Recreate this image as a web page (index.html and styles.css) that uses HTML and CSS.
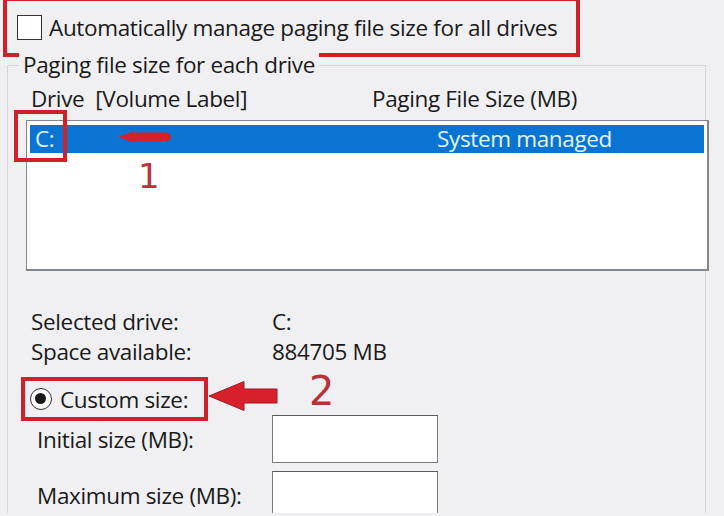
FILE: index.html
```html
<!DOCTYPE html>
<html lang="en">
<head>
    <meta charset="UTF-8">
    <meta name="viewport" content="width=device-width, initial-scale=1.0">
    <title>Virtual Memory</title>
    <link rel="stylesheet" href="styles.css">
</head>
<body>
    <div class="dialog">
        <label class="auto-row">
            <span class="checkbox"></span>
            <span>Automatically manage paging file size for all drives</span>
        </label>

        <div class="group">
            <div class="legend">Paging file size for each drive</div>
            <div class="list-head">
                <span>Drive&nbsp; [Volume Label]</span>
                <span>Paging File Size (MB)</span>
            </div>
            <div class="listbox">
                <div class="list-row selected">
                    <span>C:</span>
                    <span>System managed</span>
                </div>
            </div>

            <div class="info">
                <span>Selected drive:</span><span>C:</span>
                <span>Space available:</span><span>884705 MB</span>
            </div>

            <label class="radio-row">
                <span class="radio"></span>
                <span>Custom size:</span>
            </label>
            <div class="field-row">
                <label for="initial-size">Initial size (MB):</label>
                <input type="text" id="initial-size" class="size-input">
            </div>
            <div class="field-row">
                <label for="max-size">Maximum size (MB):</label>
                <input type="text" id="max-size" class="size-input">
            </div>
        </div>

        <!-- annotations drawn over the dialog -->
        <div class="mark mark-drive"></div>
        <svg class="arrow arrow-1" width="56" height="14" viewBox="0 0 56 14">
            <path d="M1 7 L16 1.5 L16 2.5 L48 2.5 Q54 3 54 7 Q54 11 48 11.5 L16 11.5 L16 12.5 Z" fill="#d8202c"/>
        </svg>
        <span class="step step-1">1</span>
        <svg class="arrow arrow-2" width="72" height="32" viewBox="0 0 72 32">
            <path d="M2 16 L37 1.5 L37 9 L70 9 L70 23 L37 23 L37 30.5 Z" fill="#d8202c" stroke="#9e1a22" stroke-width="1"/>
        </svg>
        <span class="step step-2">2</span>
    </div>
</body>
</html>
```

FILE: styles.css
```css
* {
    margin: 0;
    padding: 0;
    box-sizing: border-box;
}

body {
    background-color: #f0f0f2;
    color: #1a1a1a;
    font-family: 'Open Sans', 'Noto Sans', sans-serif;
    font-size: 22.5px;
    letter-spacing: -0.35px;
    overflow: hidden;
}

.dialog {
    position: relative;
    width: 724px;
    height: 516px;
}

.auto-row {
    display: flex;
    align-items: center;
    gap: 7px;
    width: 577px;
    height: 60px;
    margin: -3px 0 0 3px;
    padding-left: 10px;
    border: 4px solid #d0202a;
}

.checkbox {
    width: 25px;
    height: 25px;
    border: 1.5px solid #333;
    background: #fff;
}

.group {
    width: 699px;
    height: 460px;
    margin: 8px 0 0 7px;
    border: 1px solid #d6d6d8;
    border-bottom: none;
}

.legend {
    width: fit-content;
    margin: -13px 0 0 11px;
    padding: 0 4px;
    line-height: 24px;
    background: #f0f0f2;
}

.list-head {
    display: grid;
    grid-template-columns: 341px auto;
    margin-top: 10px;
    padding-left: 23px;
    line-height: 24px;
}

.listbox {
    width: 683px;
    height: 151px;
    margin: 9px 0 0 18px;
    padding: 4px 3px;
    background: #fff;
    border: 1px solid #82868e;
    border-right-width: 2px;
    border-bottom-width: 2px;
}

.list-row {
    display: grid;
    grid-template-columns: 402px auto;
    height: 28px;
    padding-left: 5px;
    line-height: 28px;
}

.list-row.selected {
    background: #0a74d2;
    color: #e4f4ff;
}

.info {
    display: grid;
    grid-template-columns: 241px auto;
    margin-top: 36px;
    padding-left: 23px;
    line-height: 30px;
}

.radio-row {
    display: flex;
    align-items: center;
    gap: 8px;
    width: 187px;
    height: 44px;
    margin: 10px 0 0 13px;
    padding-left: 5px;
    border: 4px solid #d0202a;
}

.radio {
    position: relative;
    width: 22px;
    height: 22px;
    border: 1.5px solid #333;
    border-radius: 50%;
    background: #fff;
}

.radio::after {
    content: '';
    position: absolute;
    top: 4px;
    left: 4px;
    width: 11px;
    height: 11px;
    border-radius: 50%;
    background: #1a1a1a;
}

.field-row {
    display: flex;
    align-items: center;
    margin-top: 8px;
    padding-left: 29px;
}

.radio-row + .field-row {
    margin-top: -6px;
}

.field-row label {
    width: 235px;
}

.size-input {
    width: 166px;
    height: 48px;
    background: #fff;
    border: 1px solid #7a7a7a;
    border-top-color: #5a5a5a;
    outline: none;
}

.mark {
    position: absolute;
    border: 4px solid #d0202a;
}

.mark-drive {
    left: 14px;
    top: 113px;
    width: 53px;
    height: 52px;
}

.arrow {
    position: absolute;
}

.arrow-1 {
    left: 117px;
    top: 133px;
}

.arrow-2 {
    left: 207px;
    top: 383px;
}

.step {
    position: absolute;
    font-family: 'DejaVu Sans', sans-serif;
    letter-spacing: 0;
    color: #b8323a;
    line-height: 0.75;
}

.step-1 {
    left: 138px;
    top: 167px;
    font-size: 34px;
}

.step-2 {
    left: 309px;
    top: 379px;
    font-size: 40px;
}
```
